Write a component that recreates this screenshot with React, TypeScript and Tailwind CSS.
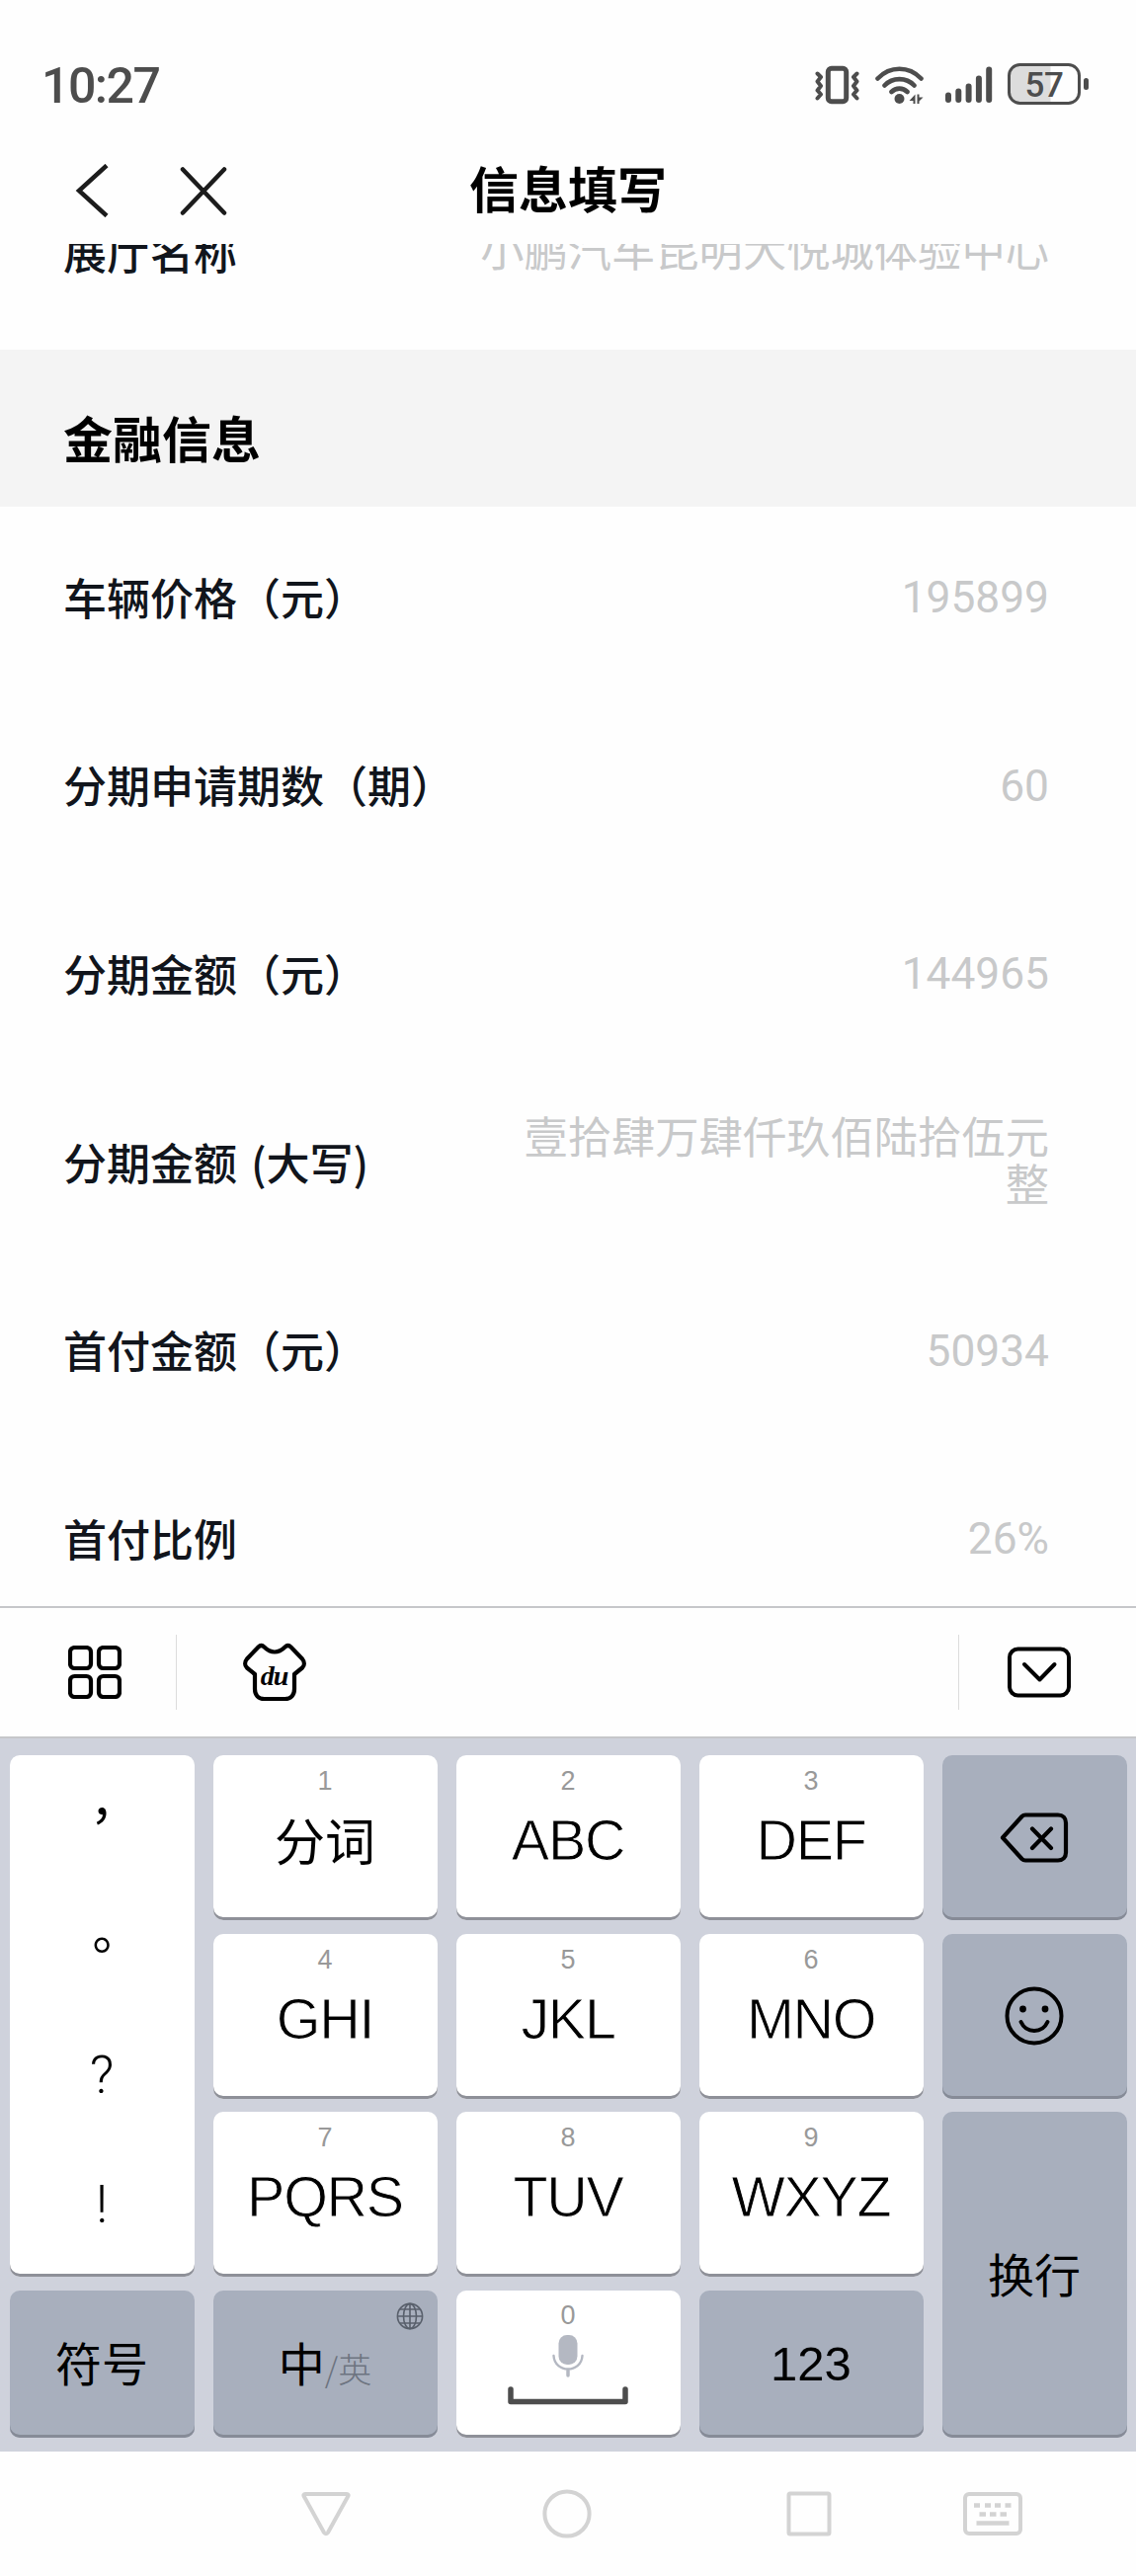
import React from 'react';

const fields = [
  { label: '车辆价格（元）', value: '195899' },
  { label: '分期申请期数（期）', value: '60' },
  { label: '分期金额（元）', value: '144965' },
  { label: '分期金额 (大写)', value: '壹拾肆万肆仟玖佰陆拾伍元\n整' },
  { label: '首付金额（元）', value: '50934' },
  { label: '首付比例', value: '26%' },
];

const VibrateIcon = () => (
  <svg width="48" height="40" viewBox="0 0 48 40" fill="none" stroke="#4d4d4d" strokeLinecap="round" strokeLinejoin="round">
    <rect x="13.300" y="3.300" width="18.400" height="33.400" rx="3.500" strokeWidth="5" />
    <path d="M2.500 8.500l3.500 3.500-3.500 4.500 3.500 4.500-3.500 4.500 3.500 4-3.500 4M42.500 8.500L39 12l3.500 4.500L39 21l3.500 4.500-3.500 4 3.500 4" strokeWidth="4" />
  </svg>
);

const WifiIcon = () => (
  <svg width="50" height="40" viewBox="0 0 50 40" fill="none" stroke="#4d4d4d" strokeWidth="4.6" strokeLinecap="round">
    <path d="M2.500 13.500C15 0.500 34 0.500 46.500 13.500M9.500 20.500C17.500 12 31.500 12 39.500 20.500M16.500 27C21 22.500 28 22.500 32.500 27" />
    <circle cx="24.500" cy="34" r="5" fill="#4d4d4d" stroke="none" />
    <path d="M40.500 29.500v9.500h-2v-3h-4zM42.500 29.500h2v3h4l-4 4v2.500h-2z" fill="#4d4d4d" stroke="none" />
  </svg>
);

const SignalIcon = () => (
  <svg width="50" height="40" viewBox="0 0 50 40" fill="none" stroke="#4d4d4d" strokeWidth="6" strokeLinecap="round">
    <path d="M4 30.500v4.500M14.300 26.500v8.500M24.600 21.500v13.500M34.900 13.500v21.500M45.200 4.500v30.500" />
  </svg>
);

const BatteryIcon = () => (
  <svg width="84" height="46" viewBox="0 0 84 46">
    <path d="M44.500 3H14C7 3 3 8 3 14v16c0 6 4 11 11 11h30.500z" fill="#dcdcdc" />
    <rect x="2.500" y="2.500" width="71" height="39" rx="11" fill="none" stroke="#4d4d4d" strokeWidth="3" />
    <rect x="78" y="16" width="5" height="12" rx="2.500" fill="#4d4d4d" />
    <text x="38" y="34.500" textAnchor="middle" fontFamily="Roboto, sans-serif" fontSize="35" fontWeight="500" letterSpacing="-0.5" fill="#4d4d4d">57</text>
  </svg>
);

const ShirtIcon = () => (
  <svg width="64" height="60" viewBox="0 0 64 60" fill="none" stroke="#000" strokeWidth="4.200" strokeLinecap="round" strokeLinejoin="round">
    <path d="M12 32l-8-6.500c-2.500-2.500-2.500-6 0-9L15.500 4.500c2-2 4-2 6 0 3 3 6 5 10.500 5s7.500-2 10.500-5c2-2 4-2 6 0L60 16.500c2.500 3 2.500 6.500 0 9L52 32v15c0 6-3.500 10-9.500 10h-21C15.500 57 12 53 12 47z" />
    <text x="31.500" y="43" textAnchor="middle" fontFamily="Liberation Serif, serif" fontStyle="italic" fontWeight="700" fontSize="28" letterSpacing="-1" fill="#000" stroke="none">du</text>
  </svg>
);

const BackspaceIcon = () => (
  <svg width="70" height="54" viewBox="0 0 70 54" fill="none" stroke="#000" strokeWidth="4.200" strokeLinecap="round" strokeLinejoin="round">
    <path d="M26 3.500h33c5 0 8 3 8 8v30c0 5-3 8-8 8H26c-1.500 0-2.500-.5-3.500-1.500L3 26.500 22.500 5C23.500 4 24.500 3.500 26 3.500zM33 17.500l19 19.500M52 17.500L33 37" />
  </svg>
);

const SmileIcon = () => (
  <svg width="62" height="62" viewBox="0 0 62 62" fill="none" stroke="#000" strokeWidth="4" strokeLinecap="round">
    <circle cx="31" cy="31" r="27.500" />
    <circle cx="19.500" cy="24" r="3.400" fill="#000" stroke="none" />
    <circle cx="42" cy="24" r="3.400" fill="#000" stroke="none" />
    <path d="M17.500 37c5.500 12 21.500 12 27 0" />
  </svg>
);

const GlobeIcon = () => (
  <svg width="28" height="28" viewBox="0 0 28 28" fill="none" stroke="#59606c" strokeWidth="1.600">
    <circle cx="14" cy="14" r="12.600" />
    <ellipse cx="14" cy="14" rx="6.500" ry="12.600" />
    <path d="M14 1.500v25M1.500 14h25M4 7h20M4 21h20" />
  </svg>
);

const SpaceIcon = () => (
  <svg width="124" height="72" viewBox="0 0 124 72" fill="none" strokeLinecap="round" strokeLinejoin="round">
    <rect x="52.500" y="0" width="19" height="30" rx="8.500" fill="#b4b8c2" />
    <path d="M47.500 21c1 18 28 18 29 0" stroke="#b4b8c2" strokeWidth="2.400" />
    <path d="M62 36v5" stroke="#b4b8c2" strokeWidth="3.500" />
    <path d="M4 55v12.500h116V55" stroke="#4d4d4d" strokeWidth="5.500" />
  </svg>
);

function FieldRow({ label, value }: { label: string; value: string }) {
  return (
    <div className="flex h-[190.7px] items-center justify-between pb-[9px] pl-16 pr-[88px] text-[44px] leading-[48px]">
      <span className="font-medium text-[#11151c] [word-spacing:4px]">{label}</span>
      <span className="whitespace-pre-line pt-[3px] text-right font-[Roboto,'Noto_Sans_CJK_SC',sans-serif] text-[44.3px] text-[#c8c9ca]">{value}</span>
    </div>
  );
}

// White key with the digit above the letters
function LetterKey({ digit, label, cjk }: { digit: string; label: string; cjk?: boolean }) {
  return (
    <button className="flex flex-col items-center rounded-[10px] bg-white pt-[10px] shadow-[inset_0_-3px_0_#8e9098]">
      <span className="font-['Liberation_Sans'] text-[27px] leading-[32px] text-[#999]">{digit}</span>
      {cjk ? (
        <span className="mt-[15px] text-[51px] leading-[56px] text-black">{label}</span>
      ) : (
        <span className="mt-[16px] font-['Liberation_Sans'] text-[57.5px] leading-[56px] tracking-[-1.3px] text-black [-webkit-text-stroke:0.9px_white]">{label}</span>
      )}
    </button>
  );
}

function DarkKey({ className = '', children }: { className?: string; children: React.ReactNode }) {
  return (
    <button className={`relative flex items-center justify-center rounded-[10px] bg-[#a8afbd] text-[47px] leading-none text-black shadow-[inset_0_-3px_0_#868b97] ${className}`}>
      {children}
    </button>
  );
}

export default function App() {
  return (
    <div className="flex h-[2608px] w-[1150px] flex-col overflow-hidden bg-[#fefefe] font-['Noto_Sans_CJK_SC',sans-serif]">
      {/* Status bar */}
      <div className="flex h-[138px] shrink-0 items-center justify-between pl-[42px] pr-[47px] pt-[34px]">
        <span className="pt-[2px] font-[Roboto] text-[50px] font-medium leading-none tracking-[-1.5px] text-[#4d4d4d]">10:27</span>
        <div className="flex items-center">
          <VibrateIcon />
          <div className="ml-[13px]"><WifiIcon /></div>
          <div className="ml-[20px]"><SignalIcon /></div>
          <div className="ml-[13px]"><BatteryIcon /></div>
        </div>
      </div>

      {/* Title bar */}
      <div className="grid h-[109px] shrink-0 grid-cols-[1fr_auto_1fr] items-center">
        <div className="flex items-center gap-[70px] pl-[75px]">
          <svg width="36" height="54" viewBox="0 0 36 54" fill="none" stroke="#1c1c1c" strokeWidth="4.500">
            <path d="M33 1.500L5 27l28 25.500" />
          </svg>
          <svg width="50" height="50" viewBox="0 0 50 50" fill="none" stroke="#1c1c1c" strokeWidth="4.500" strokeLinecap="round">
            <path d="M4 3.500l42 44M46 3.500l-42 44" />
          </svg>
        </div>
        <h1 className="pb-[7px] text-[50px] font-bold leading-none text-black">信息填写</h1>
      </div>

      {/* Scrolled form */}
      <div className="h-[1379px] shrink-0 overflow-hidden">
        <div className="-mt-[84px]">
          <FieldRow label="展厅名称" value="小鹏汽车昆明大悦城体验中心" />
          <div className="flex h-[159px] items-center bg-[#f4f4f4] pl-16 pt-[18px]">
            <h2 className="text-[50px] font-bold leading-none text-black">金融信息</h2>
          </div>
          {fields.map(f => (
            <FieldRow key={f.label} label={f.label} value={f.value} />
          ))}
        </div>
      </div>

      {/* Keyboard toolbar */}
      <div className="flex h-[134px] shrink-0 items-center border-y-2 border-[#c6c7ca] bg-[#fefefe]">
        <div className="flex w-[178px] justify-center pl-[14px]">
          <svg width="54" height="54" viewBox="0 0 54 54" fill="none" stroke="#000" strokeWidth="4.200">
            <rect x="2" y="2" width="21" height="21" rx="4.500" />
            <rect x="31" y="2" width="21" height="21" rx="4.500" />
            <rect x="2" y="31" width="21" height="21" rx="4.500" />
            <rect x="31" y="31" width="21" height="21" rx="4.500" />
          </svg>
        </div>
        <div className="h-[76px] w-px bg-[#dcdcdc]" />
        <div className="ml-[67px] flex-1"><ShirtIcon /></div>
        <div className="h-[76px] w-px bg-[#dcdcdc]" />
        <div className="flex w-[179px] pl-[49px]">
          <svg width="64" height="52" viewBox="0 0 64 52" fill="none" stroke="#000" strokeWidth="4" strokeLinecap="round" strokeLinejoin="round">
            <rect x="2" y="2.500" width="60" height="47" rx="8.500" />
            <path d="M17 18l15.500 15.500L47.500 18" />
          </svg>
        </div>
      </div>

      {/* Keys */}
      <div className="grid h-[722px] shrink-0 grid-cols-[187px_227px_227px_227px_187px] grid-rows-[167px_167px_167px_149px] gap-x-[19px] gap-y-[13.5px] bg-[#cfd2dc] pl-[9.5px] pt-[17px]">
        <div className="row-span-3 rounded-[10px] bg-white shadow-[inset_0_-3px_0_#8e9098]">
          <div className="-mt-[7px] flex flex-col items-center font-['Noto_Sans_CJK_TC'] text-[50px] leading-[130.5px] text-black">
            <span>，</span>
            <span>。</span>
            <span className="mt-[5px] font-[Roboto] text-[54px] font-light">?</span>
            <span className="font-[Roboto] text-[54px] font-light">!</span>
          </div>
        </div>
        <LetterKey digit="1" label="分词" cjk />
        <LetterKey digit="2" label="ABC" />
        <LetterKey digit="3" label="DEF" />
        <DarkKey><BackspaceIcon /></DarkKey>
        <LetterKey digit="4" label="GHI" />
        <LetterKey digit="5" label="JKL" />
        <LetterKey digit="6" label="MNO" />
        <DarkKey><SmileIcon /></DarkKey>
        <LetterKey digit="7" label="PQRS" />
        <LetterKey digit="8" label="TUV" />
        <LetterKey digit="9" label="WXYZ" />
        <DarkKey className="row-span-2 pb-[5px]">换行</DarkKey>
        <DarkKey className="pb-[5px]">符号</DarkKey>
        <DarkKey className="pb-[5px]">
          <span>中</span>
          <span className="pt-[14px] text-[34px] font-light text-[#6d7480]">/英</span>
          <span className="absolute right-[14px] top-[12px]"><GlobeIcon /></span>
        </DarkKey>
        <button className="flex flex-col items-center rounded-[10px] bg-white pt-[9px] shadow-[inset_0_-3px_0_#8e9098]">
          <span className="mb-[4px] font-['Liberation_Sans'] text-[27px] leading-[32px] text-[#999]">0</span>
          <SpaceIcon />
        </button>
        <DarkKey>
          <span className="font-['Liberation_Sans'] text-[49px]">123</span>
        </DarkKey>
      </div>

      {/* Android navigation */}
      <div className="flex flex-1 items-center pl-[304px]">
        <svg width="52" height="48" viewBox="0 0 52 48" fill="none" stroke="#d3d3d3" strokeWidth="4" strokeLinejoin="round">
          <path d="M5 4h42c1.500 0 2 1 1.300 2.200L28 43c-1 1.600-3 1.600-4 0L3.700 6.200C3 5 3.500 4 5 4z" />
        </svg>
        <svg className="ml-[193px]" width="50" height="50" viewBox="0 0 50 50" fill="none" stroke="#d3d3d3" strokeWidth="4">
          <circle cx="25" cy="25" r="22.600" />
        </svg>
        <svg className="ml-[197px]" width="46" height="46" viewBox="0 0 46 46" fill="none" stroke="#d3d3d3" strokeWidth="4">
          <rect x="2.500" y="2.500" width="41" height="41" rx="1.500" />
        </svg>
        <svg className="ml-[132px]" width="62" height="46" viewBox="0 0 62 46" fill="none" stroke="#d3d3d3" strokeWidth="4">
          <rect x="3" y="3" width="56" height="40" rx="4" />
          <path d="M12 14.500h6M23 14.500h6M33 14.500h6M43.500 14.500h6M17.500 23.500h6.500M28 23.500h6.500M38.500 23.500h6.500M14.500 32.500h33" strokeWidth="4.500" />
        </svg>
      </div>
    </div>
  );
}
